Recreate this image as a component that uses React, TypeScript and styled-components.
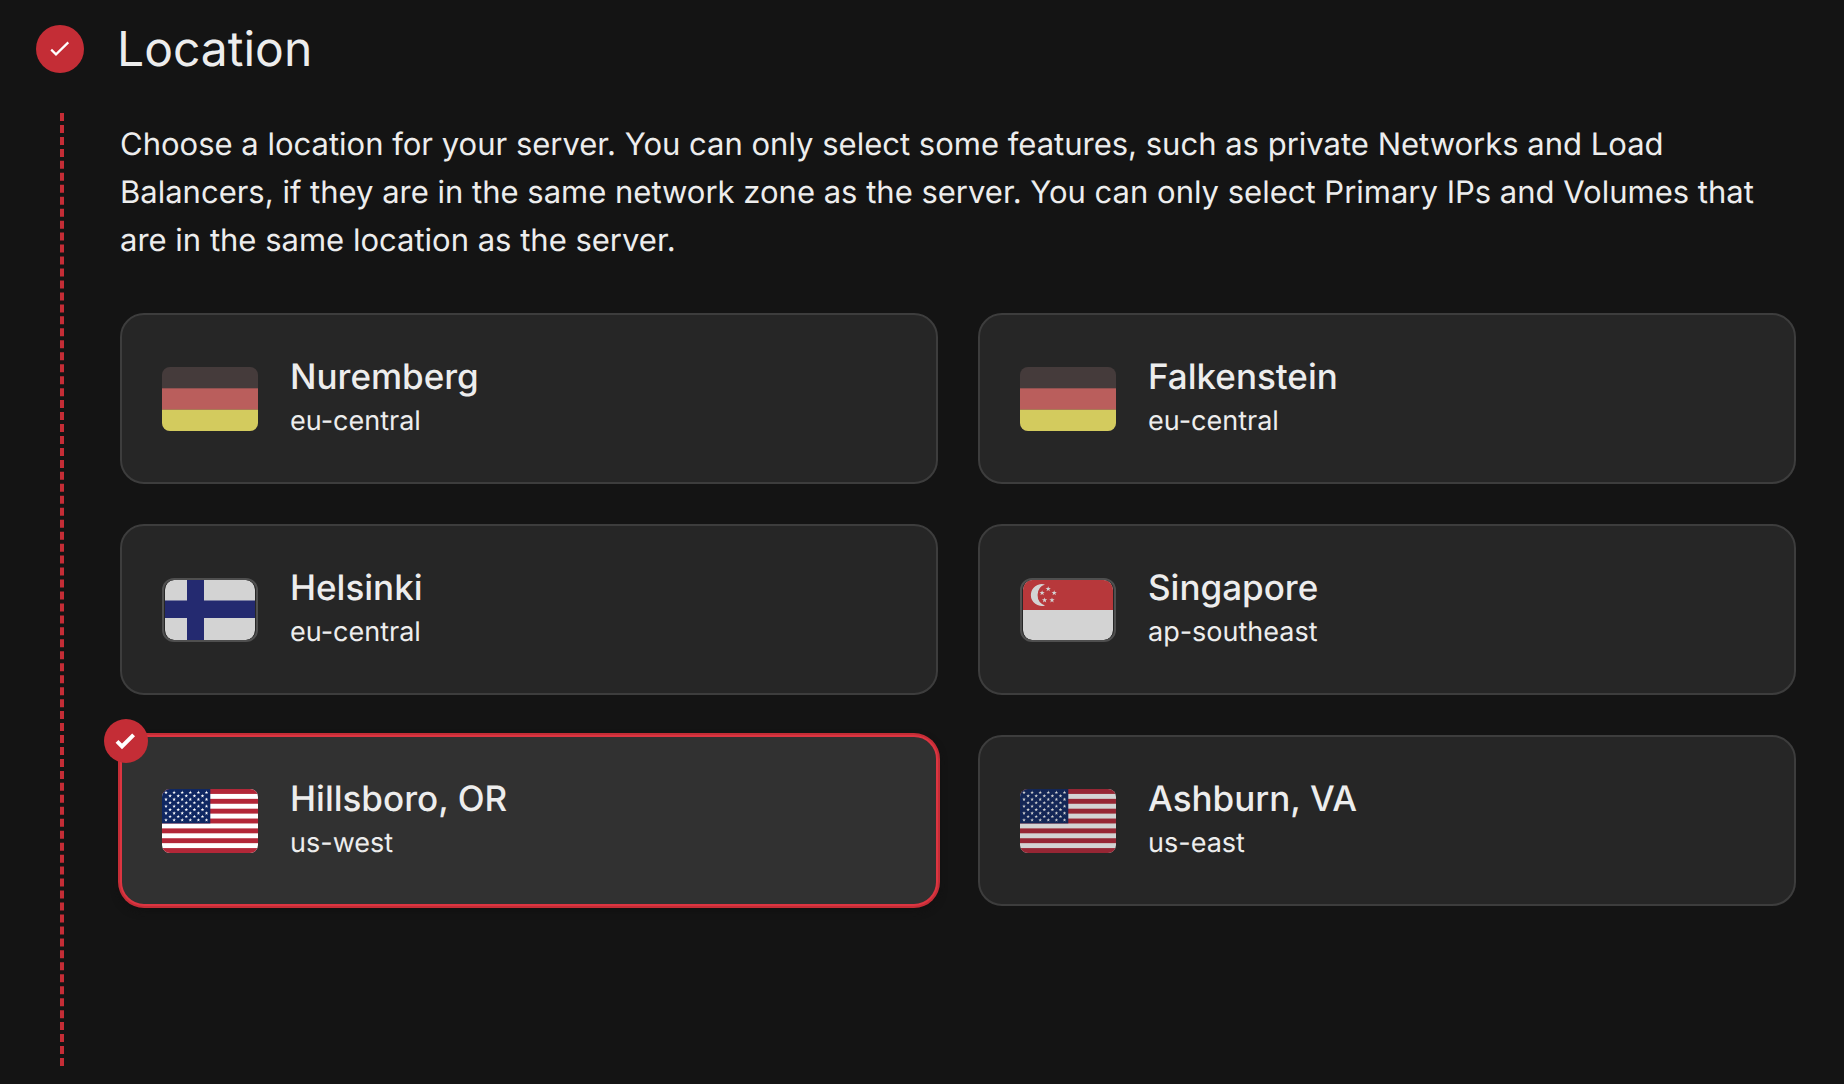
import React, { useState } from "react";
import styled, { createGlobalStyle, css } from "styled-components";

const GlobalStyle = createGlobalStyle`
  *, *::before, *::after {
    box-sizing: border-box;
  }

  body {
    margin: 0;
    background: #141414;
    color: #ededed;
    font-family: Inter, "Liberation Sans", sans-serif;
    font-size: 31px;
    text-rendering: geometricPrecision;
    line-height: 48px;
  }
`;

const Step = styled.section`
  display: grid;
  grid-template-columns: 48px 1fr;
  grid-template-rows: 97px 1fr;
  column-gap: 36px;
  row-gap: 16px;
  min-height: 100vh;
  padding: 0 48px 18px 36px;
`;

const StepStatus = styled.span`
  display: flex;
  align-items: center;
  justify-content: center;
  width: 48px;
  height: 48px;
  margin-top: 25px;
  border-radius: 50%;
  background: #c42d36;
`;

const StepTitle = styled.h2`
  margin: 17px 0 0 -3px;
  font-size: 48px;
  font-weight: 400;
  line-height: 64px;
`;

const StepLine = styled.div`
  justify-self: center;
  margin-left: 4px;
  border-left: 4px dashed #c42d36;
`;

const StepBody = styled.div`
  padding-top: 8px;
`;

const Description = styled.p`
  margin: 0 0 48px;
`;

const Options = styled.div`
  display: grid;
  grid-template-columns: repeat(2, minmax(0, 1fr));
  gap: 40px;
`;

const Flag = styled.svg<{ $outlined?: boolean }>`
  flex: none;
  width: 96px;
  height: 64px;
  border-radius: 8px;
  ${(p) =>
    p.$outlined &&
    css`
      padding: 0 1px;
      border: 2px solid #5a5a5a;
      border-radius: 12px;
    `}
`;

const Card = styled.label<{ $selected: boolean }>`
  position: relative;
  display: flex;
  align-items: center;
  gap: 32px;
  height: 171px;
  padding: 0 40px;
  border: 2px solid ${(p) => (p.$selected ? "#dc3541" : "#3d3d3d")};
  border-radius: 24px;
  background: ${(p) => (p.$selected ? "#313131" : "#262626")};
  box-shadow: ${(p) =>
    p.$selected ? "0 0 0 2px #c42d36, 0 4px 8px #101010" : "none"};
  cursor: pointer;

  ${Flag} {
    opacity: ${(p) => (p.$selected ? 1 : 0.8)};
  }
`;

const CardRadio = styled.input`
  position: absolute;
  inset: 0;
  width: 100%;
  height: 100%;
  margin: 0;
  opacity: 0;
  cursor: pointer;
`;

const CardBadge = styled.span`
  position: absolute;
  top: -18px;
  left: -18px;
  display: flex;
  align-items: center;
  justify-content: center;
  width: 44px;
  height: 44px;
  border-radius: 50%;
  background: #c42d36;
`;

const CardText = styled.span`
  display: flex;
  flex-direction: column;
  padding-bottom: 4px;
`;

const CardTitle = styled.span`
  font-size: 35px;
  font-weight: 500;
  line-height: 48px;
`;

const CardZone = styled.span`
  font-size: 27px;
  line-height: 40px;
`;

const starPoints = (cx: number, cy: number, r: number) =>
  Array.from({ length: 10 }, (_, i) => {
    const radius = i % 2 === 0 ? r : r * 0.4;
    const angle = (Math.PI / 5) * i - Math.PI / 2;
    return `${cx + radius * Math.cos(angle)},${cy + radius * Math.sin(angle)}`;
  }).join(" ");

const GermanFlag = () => (
  <Flag viewBox="0 0 96 64" aria-hidden="true">
    <rect width="96" height="64" fill="#4d4141" />
    <rect y="21.33" width="96" height="21.34" fill="#e06c6a" />
    <rect y="42.67" width="96" height="21.33" fill="#fff56c" />
  </Flag>
);

const FinnishFlag = () => (
  <Flag $outlined viewBox="0 0 90 60" aria-hidden="true">
    <defs>
      <clipPath id="finland">
        <rect width="90" height="60" rx="9" />
      </clipPath>
    </defs>
    <g clipPath="url(#finland)">
      <rect width="90" height="60" fill="#fff" />
      <path d="M22 0h17v60H22zM0 20.5h90V38H0z" fill="#242b83" />
    </g>
  </Flag>
);

const SingaporeFlag = () => (
  <Flag $outlined viewBox="0 0 90 60" aria-hidden="true">
    <defs>
      <clipPath id="singapore">
        <rect width="90" height="60" rx="9" />
      </clipPath>
    </defs>
    <g clipPath="url(#singapore)">
      <rect width="90" height="60" fill="#fff" />
      <rect width="90" height="30" fill="#dc3d41" />
      <path d="M22 4.6A10.9 10.9 0 1 0 22 25.4A11 11 0 0 1 22 4.6Z" fill="#fff" />
      {[
        [25.2, 9],
        [31.2, 13],
        [29, 20.2],
        [21.6, 20.2],
        [19.1, 13],
      ].map(([x, y]) => (
        <polygon key={`${x}-${y}`} points={starPoints(x, y, 2.8)} fill="#fff" />
      ))}
    </g>
  </Flag>
);

const AmericanFlag = () => (
  <Flag viewBox="0 0 96 64" aria-hidden="true">
    <rect width="96" height="64" fill="#fff" />
    {Array.from({ length: 7 }, (_, i) => (
      <rect key={i} y={(i * 128) / 13} width="96" height={64 / 13} fill="#b22738" />
    ))}
    <rect width="48.3" height="34.4" fill="#0f2762" />
    {Array.from({ length: 9 }, (_, row) =>
      Array.from({ length: row % 2 ? 5 : 6 }, (_, col) => (
        <polygon
          key={`${row}-${col}`}
          points={starPoints((row % 2 ? 8.1 : 4) + col * 8.1, 3.5 + row * 3.44, 1.9)}
          fill="#fff"
        />
      ))
    )}
  </Flag>
);

const locations = [
  { name: "Nuremberg", zone: "eu-central", flag: GermanFlag },
  { name: "Falkenstein", zone: "eu-central", flag: GermanFlag },
  { name: "Helsinki", zone: "eu-central", flag: FinnishFlag },
  { name: "Singapore", zone: "ap-southeast", flag: SingaporeFlag },
  { name: "Hillsboro, OR", zone: "us-west", flag: AmericanFlag },
  { name: "Ashburn, VA", zone: "us-east", flag: AmericanFlag },
];

export default function App() {
  const [selected, setSelected] = useState("Hillsboro, OR");

  return (
    <>
      <GlobalStyle />
      <Step>
        <StepStatus>
          <svg width="20" height="16" viewBox="0 0 20 16" aria-hidden="true">
            <path d="M1.2 8.6 6 13.4 18.3 1.4" fill="none" stroke="#fff" strokeWidth="2.2" />
          </svg>
        </StepStatus>
        <StepTitle id="location-title">Location</StepTitle>
        <StepLine />
        <StepBody>
          <Description>
            Choose a location for your server. You can only select some features,
            such as private Networks and Load Balancers, if they are in the same
            network zone as the server. You can only select Primary IPs and Volumes
            that are in the same location as the server.
          </Description>
          <Options role="radiogroup" aria-labelledby="location-title">
            {locations.map(({ name, zone, flag: FlagIcon }) => (
              <Card key={name} $selected={name === selected}>
                <CardRadio
                  type="radio"
                  name="location"
                  value={name}
                  checked={name === selected}
                  onChange={() => setSelected(name)}
                />
                <FlagIcon />
                <CardText>
                  <CardTitle>{name}</CardTitle>
                  <CardZone>{zone}</CardZone>
                </CardText>
                {name === selected && (
                  <CardBadge>
                    <svg width="22" height="18" viewBox="0 0 22 18" aria-hidden="true">
                      <path d="M2 9.4 7 14.4 18.6 2.8" fill="none" stroke="#fff" strokeWidth="4" />
                    </svg>
                  </CardBadge>
                )}
              </Card>
            ))}
          </Options>
        </StepBody>
      </Step>
    </>
  );
}
